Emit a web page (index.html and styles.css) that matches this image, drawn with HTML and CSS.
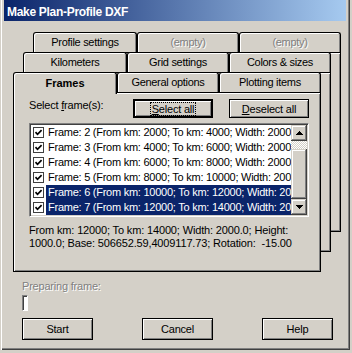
FILE: index.html
```html
<!DOCTYPE html>
<html>
<head>
<meta charset="utf-8">
<title>Make Plan-Profile DXF</title>
<link rel="stylesheet" href="styles.css">
</head>
<body>
<div class="window">
  <div class="titlebar">Make Plan-Profile DXF</div>

  <div class="tabstack">
    <div class="layer layer-3">
      <div class="tabrow">
        <div class="tab">Profile settings</div>
        <div class="tab disabled">(empty)</div>
        <div class="tab disabled">(empty)</div>
      </div>
      <div class="page"></div>
    </div>

    <div class="layer layer-2">
      <div class="tabrow">
        <div class="tab">Kilometers</div>
        <div class="tab">Grid settings</div>
        <div class="tab">Colors &amp; sizes</div>
      </div>
      <div class="page"></div>
    </div>

    <div class="layer layer-1">
      <div class="tabrow">
        <div class="tab active">Frames</div>
        <div class="tab">General options</div>
        <div class="tab">Plotting items</div>
      </div>
      <div class="page page-front">
        <div class="select-row">
          <span class="select-label">Select <u>f</u>rame(s):</span>
          <button class="btn btn-small btn-default"><span class="focus"><u>S</u>elect all</span></button>
          <button class="btn btn-small"><u>D</u>eselect all</button>
        </div>

        <div class="listbox">
          <div class="rows">
            <div class="row">
              <span class="chk"><svg width="11" height="11" viewBox="0 0 11 11"><rect x="0.5" y="0.5" width="10" height="10" fill="#fff" stroke="#404040"/><path d="M2.5 5.2 L4.5 7.3 L8.6 3.2" stroke="#000" stroke-width="1.7" fill="none"/></svg></span>
              <span class="txt">Frame: 2 (From km: 2000; To km: 4000; Width: 2000.0; Height: 1000.0)</span>
            </div>
            <div class="row">
              <span class="chk"><svg width="11" height="11" viewBox="0 0 11 11"><rect x="0.5" y="0.5" width="10" height="10" fill="#fff" stroke="#404040"/><path d="M2.5 5.2 L4.5 7.3 L8.6 3.2" stroke="#000" stroke-width="1.7" fill="none"/></svg></span>
              <span class="txt">Frame: 3 (From km: 4000; To km: 6000; Width: 2000.0; Height: 1000.0)</span>
            </div>
            <div class="row">
              <span class="chk"><svg width="11" height="11" viewBox="0 0 11 11"><rect x="0.5" y="0.5" width="10" height="10" fill="#fff" stroke="#404040"/><path d="M2.5 5.2 L4.5 7.3 L8.6 3.2" stroke="#000" stroke-width="1.7" fill="none"/></svg></span>
              <span class="txt">Frame: 4 (From km: 6000; To km: 8000; Width: 2000.0; Height: 1000.0)</span>
            </div>
            <div class="row">
              <span class="chk"><svg width="11" height="11" viewBox="0 0 11 11"><rect x="0.5" y="0.5" width="10" height="10" fill="#fff" stroke="#404040"/><path d="M2.5 5.2 L4.5 7.3 L8.6 3.2" stroke="#000" stroke-width="1.7" fill="none"/></svg></span>
              <span class="txt">Frame: 5 (From km: 8000; To km: 10000; Width: 2000.0; Height: 1000.0)</span>
            </div>
            <div class="row sel">
              <span class="chk"><svg width="11" height="11" viewBox="0 0 11 11"><rect x="0.5" y="0.5" width="10" height="10" fill="#fff" stroke="#404040"/><path d="M2.5 5.2 L4.5 7.3 L8.6 3.2" stroke="#000" stroke-width="1.7" fill="none"/></svg></span>
              <span class="txt">Frame: 6 (From km: 10000; To km: 12000; Width: 2000.0; Height: 1000.0)</span>
            </div>
            <div class="row sel">
              <span class="chk"><svg width="11" height="11" viewBox="0 0 11 11"><rect x="0.5" y="0.5" width="10" height="10" fill="#fff" stroke="#404040"/><path d="M2.5 5.2 L4.5 7.3 L8.6 3.2" stroke="#000" stroke-width="1.7" fill="none"/></svg></span>
              <span class="txt">Frame: 7 (From km: 12000; To km: 14000; Width: 2000.0; Height: 1000.0)</span>
            </div>
          </div>
          <div class="scrollbar">
            <div class="sb-btn"><svg width="7" height="4" viewBox="0 0 7 4"><path d="M3 0h1v1h1v1h1v1h1v1H0V3h1V2h1V1h1z" fill="#000"/></svg></div>
            <div class="sb-track"></div>
            <div class="sb-thumb"></div>
            <div class="sb-btn"><svg width="7" height="4" viewBox="0 0 7 4"><path d="M0 0h7v1h-1v1h-1v1h-1v1h-1V3h-1V2h-1V1H0z" fill="#000"/></svg></div>
          </div>
        </div>

        <p class="info">From km: 12000; To km: 14000; Width: 2000.0; Height:<br>1000.0; Base: 506652.59,4009117.73; Rotation: &nbsp;-15.00</p>
      </div>
    </div>
  </div>

  <div class="progress-area">
    <div class="prep-label">Preparing frame:</div>
    <div class="progress"></div>
  </div>

  <div class="button-row">
    <button class="btn btn-large">Start</button>
    <button class="btn btn-large">Cancel</button>
    <button class="btn btn-large">Help</button>
  </div>
</div>
</body>
</html>
```

FILE: styles.css
```css
html, body {
  margin: 0;
  padding: 0;
  background: #d4d0c8;
}

body {
  width: 352px;
  height: 353px;
  overflow: hidden;
  font-family: "Liberation Sans", Arial, sans-serif;
  font-size: 11px;
  letter-spacing: -0.2px;
  color: #000;
}

.window {
  width: 350px;
  height: 350px;
  box-sizing: border-box;
  padding: 0 4px 4px 4px;
  background: #d4d0c8;
  box-shadow: inset 1px 0 #d4d0c8, inset 2px 0 #fff, inset -1px -1px #404040, inset -2px -2px #808080;
  display: flex;
  flex-direction: column;
}

.titlebar {
  height: 21px;
  box-sizing: border-box;
  padding: 3px 0 0 3px;
  line-height: 18px;
  background: linear-gradient(to right, #0a246a, #a6caf0);
  color: #fff;
  font-weight: bold;
  font-size: 12px;
  letter-spacing: -0.3px;
  white-space: nowrap;
}

/* stacked multi-row tab control */
.tabstack {
  display: grid;
  margin: 11px 0 0 9px;
  width: 328px;
  height: 240px;
}

.layer {
  grid-area: 1 / 1;
  width: 308px;
  height: 200px;
  display: flex;
  flex-direction: column;
}

.layer-3 { margin-left: 20px; }
.layer-2 { margin: 20px 0 0 10px; }
.layer-1 { margin-top: 40px; }

.tabrow {
  display: flex;
  height: 20px;
  flex: none;
}

.tab {
  box-sizing: border-box;
  flex: none;
  width: 102px;
  height: 20px;
  border: 1px solid #000;
  border-bottom: 0;
  border-radius: 3px 3px 0 0;
  box-shadow: inset 1px 1px #fff, inset -1px 0 #808080;
  background: #d4d0c8;
  text-align: center;
  line-height: 19px;
  letter-spacing: -0.3px;
  white-space: nowrap;
}

.tab:first-child { width: 104px; }

.tab.disabled {
  color: #808080;
  text-shadow: 1px 1px #fff;
}

.tab.active {
  height: 22px;
  margin-bottom: -2px;
  position: relative;
  z-index: 1;
  font-weight: bold;
  letter-spacing: 0;
  line-height: 21px;
}

.page {
  flex: none;
  height: 180px;
  box-sizing: border-box;
  border: 1px solid #000;
  box-shadow: inset 1px 1px #fff, inset -1px -1px #808080;
  background: #d4d0c8;
}

.page-front {
  padding: 6px 0 0 15px;
}

.select-row {
  display: flex;
  align-items: flex-start;
  height: 19px;
}

.select-label {
  width: 104px;
  line-height: 13px;
  flex: none;
}

.btn {
  box-sizing: border-box;
  margin: 0;
  padding: 0;
  font: inherit;
  letter-spacing: inherit;
  color: #000;
  background: #d4d0c8;
  border: 1px solid #000;
  box-shadow: inset 1px 1px #fff, inset -1px -1px #808080;
  display: flex;
  align-items: center;
  justify-content: center;
  flex: none;
}

.btn-small {
  width: 80px;
  height: 19px;
  margin-right: 16px;
}

.btn-default {
  border-width: 2px;
}

.focus {
  outline: 1px dotted #000;
  line-height: 12px;
  padding: 0 1px;
}

.listbox {
  margin-top: 5px;
  width: 280px;
  height: 94px;
  box-sizing: border-box;
  border: 1px solid;
  border-color: #808080 #fff #fff #808080;
  box-shadow: inset 1px 1px #404040, inset -1px -1px #d4d0c8;
  padding: 1px;
  background: #fff;
  display: flex;
}

.rows {
  flex: 1;
  min-width: 0;
  background: #fff;
}

.row {
  display: flex;
  align-items: center;
  height: 15px;
}

.chk {
  flex: none;
  width: 11px;
  height: 11px;
  margin: 0 2px 0 2px;
  display: block;
}

.chk svg { display: block; }

.txt {
  flex: 1;
  min-width: 0;
  overflow: hidden;
  white-space: nowrap;
  line-height: 15px;
  padding-left: 2px;
  letter-spacing: -0.25px;
}

.row.sel .txt {
  background: #0a246a;
  color: #fff;
}

.scrollbar {
  flex: none;
  width: 16px;
  display: flex;
  flex-direction: column;
  background: repeating-conic-gradient(#d4d0c8 0 25%, #fff 0 50%) 0 0 / 2px 2px;
}

.sb-btn, .sb-thumb {
  background: #d4d0c8;
  box-shadow: inset -1px -1px #404040, inset 1px 1px #d4d0c8, inset -2px -2px #808080, inset 2px 2px #fff;
}

.sb-btn {
  height: 16px;
  display: flex;
  align-items: center;
  justify-content: center;
}

.sb-btn svg { display: block; }

.sb-track { height: 8px; }
.sb-thumb { height: 50px; }

.info {
  margin: 7px 0 0 0;
  line-height: 13px;
  letter-spacing: -0.15px;
  white-space: nowrap;
}

.progress-area {
  margin: 8px 0 0 18px;
}

.prep-label {
  line-height: 13px;
  color: #808080;
  text-shadow: 1px 1px #fff;
}

.progress {
  margin-top: 2px;
  width: 6px;
  height: 16px;
  box-sizing: border-box;
  border: 1px solid;
  border-color: #808080 #fff #fff #808080;
  box-shadow: inset 1px 1px #404040;
  background: #fff;
}

.button-row {
  display: flex;
  gap: 49px;
  margin: 7px 0 0 18px;
}

.btn-large {
  width: 71px;
  height: 22px;
}
```
